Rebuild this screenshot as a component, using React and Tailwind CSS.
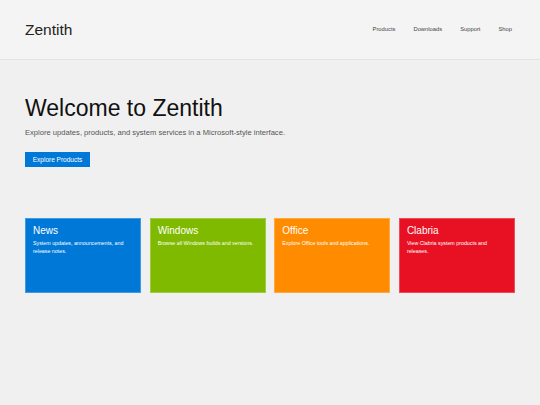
export default function App() {
  const tiles = [
    { title: 'News', text: 'System updates, announcements, and release notes.', bg: 'bg-[#0078d7]' },
    { title: 'Windows', text: 'Browse all Windows builds and versions.', bg: 'bg-[#7fba00]' },
    { title: 'Office', text: 'Explore Office tools and applications.', bg: 'bg-[#ff8c00]' },
    { title: 'Clabria', text: 'View Clabria system products and releases.', bg: 'bg-[#e81123]' },
  ]

  return (
    <div className="min-h-[405px] bg-[#f0f0f0] font-['Liberation_Sans',Arial,sans-serif] text-[#111]">
      <header className="h-[60px] bg-[#f4f4f4] border-b border-[#e3e3e3] px-[25px] flex items-center justify-between">
        <div className="text-[15.5px] text-[#222]">Zentith</div>
        <nav className="flex gap-[18px] pr-[3px] text-[5.8px] text-[#444]">
          <a>Products</a>
          <a>Downloads</a>
          <a>Support</a>
          <a>Shop</a>
        </nav>
      </header>

      <main className="px-[25px]">
        <section className="pt-[34px]">
          <h1 className="text-[23px] leading-[28px] text-[#111]">Welcome to Zentith</h1>
          <p className="mt-[5px] text-[7.6px] text-[#555]">
            Explore updates, products, and system services in a Microsoft-style interface.
          </p>
          <button className="mt-[14px] h-[15px] w-[65px] bg-[#0078d7] text-white text-[6.5px]">
            Explore Products
          </button>
        </section>

        <section className="mt-[49px] grid grid-cols-4 gap-[8.5px] w-[490px]">
          {tiles.map((t) => (
            <div key={t.title} className={`${t.bg} h-[75px] border border-white/25 px-[7px] pt-[5px] text-white`}>
              <div className="text-[10px] leading-[13px]">{t.title}</div>
              <p className="mt-[2px] text-[5.3px] leading-[8px] pr-[4px]">{t.text}</p>
            </div>
          ))}
        </section>
      </main>
    </div>
  )
}
